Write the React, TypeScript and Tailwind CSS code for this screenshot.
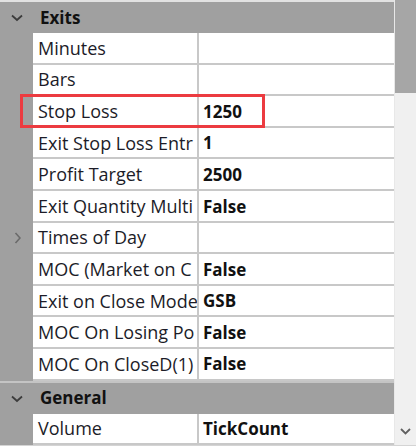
import React from 'react';

type Row = { name: string; value?: string; expand?: boolean; mark?: boolean };

// names are cut by the column width in the grid, so keep what is visible
const exits: Row[] = [
  { name: 'Minutes' },
  { name: 'Bars' },
  { name: 'Stop Loss', value: '1250', mark: true },
  { name: 'Exit Stop Loss Entr', value: '1' },
  { name: 'Profit Target', value: '2500' },
  { name: 'Exit Quantity Multi', value: 'False' },
  { name: 'Times of Day', expand: true },
  { name: 'MOC (Market on C', value: 'False' },
  { name: 'Exit on Close Mode', value: 'GSB' },
  { name: 'MOC On Losing Po', value: 'False' },
  { name: 'MOC On CloseD(1)', value: 'False' },
];

const general: Row[] = [{ name: 'Volume', value: 'TickCount' }];

function Chevron({ down }: { down?: boolean }) {
  return down ? (
    <svg width="12" height="8" viewBox="0 0 12 8" className="block">
      <polyline points="1,1.5 6,6 11,1.5" fill="none" stroke="#3c3c3c" strokeWidth="1.8" />
    </svg>
  ) : (
    <svg width="7" height="12" viewBox="0 0 7 12" className="block">
      <polyline points="1.5,1 6,6 1.5,11" fill="none" stroke="#6a6a6a" strokeWidth="1.6" />
    </svg>
  );
}

function Header({ title }: { title: string }) {
  return (
    <div className="flex h-[31px] items-center bg-[#a0a0a0]">
      <div className="flex w-[33px] justify-center pl-[1px] pt-[1px]">
        <Chevron down />
      </div>
      <span className="pl-[7px] text-[17px] font-bold text-[#111]">{title}</span>
    </div>
  );
}

function PropRow({ row }: { row: Row }) {
  return (
    <div className="relative flex h-[31.6px]">
      <div className="flex w-[33px] items-center justify-center bg-[#a0a0a0] pl-[2px]">
        {row.expand && <Chevron />}
      </div>
      <div className="flex w-[166px] items-center overflow-hidden whitespace-nowrap border-b-2 border-r-2 border-[#c8c8c8] bg-white pl-[5px] pt-[1px] text-[18px] text-[#1c1c28]">
        {row.name}
      </div>
      <div className="flex flex-1 items-center overflow-hidden border-b-2 border-[#c8c8c8] bg-white pl-[4px] pt-[1px] text-[17px] font-bold text-[#111]">
        {row.value}
      </div>
      {row.mark && (
        <span className="pointer-events-none absolute left-[20px] top-[-2px] h-[34px] w-[245px] border-[3px] border-[#ec3b40]" />
      )}
    </div>
  );
}

export default function App() {
  return (
    <div
      className="flex h-[446px] w-[416px] flex-col overflow-hidden bg-[#f0f0f0]"
      style={{ fontFamily: '"Open Sans", "Noto Sans", sans-serif' }}
    >
      <div className="flex flex-1">
        {/* grid */}
        <div className="flex w-[394px] flex-col">
          <div className="h-[2px] bg-[#e2e2e2]" />
          <Header title="Exits" />
          {exits.map((r) => (
            <PropRow key={r.name} row={r} />
          ))}
          <div className="h-[2px] bg-[#c4c4c4]" />
          <Header title="General" />
          {general.map((r) => (
            <PropRow key={r.name} row={r} />
          ))}
        </div>

        {/* scrollbar */}
        <div className="flex flex-1 flex-col border-l border-[#e8e8e8] bg-[#f0f0f0]">
          <div className="h-[93px] bg-[#a6a6a6]" />
          <div className="flex-1" />
          <div className="flex h-[20px] items-start justify-center pt-[3px]">
            <svg width="11" height="7" viewBox="0 0 11 7">
              <polyline points="1,1 5.5,5.5 10,1" fill="none" stroke="#606060" strokeWidth="1.8" />
            </svg>
          </div>
        </div>
      </div>
      <div className="h-[8px] border-t-2 border-[#d4d4d4] bg-[#f0f0f0]" />
    </div>
  );
}
